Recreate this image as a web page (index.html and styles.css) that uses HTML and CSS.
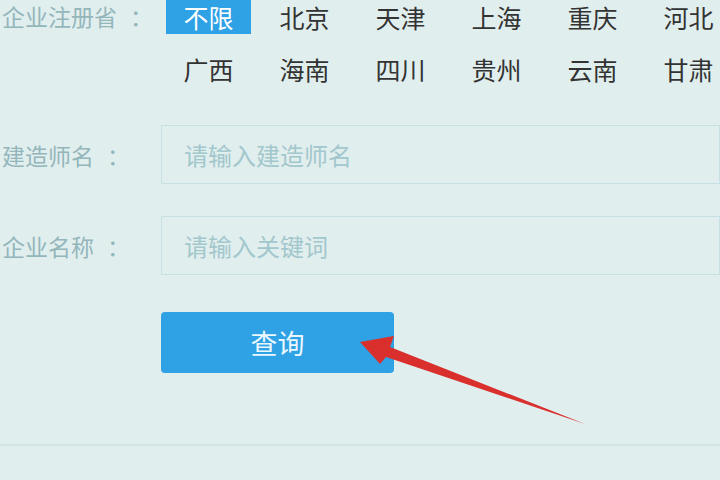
FILE: index.html
```html
<!DOCTYPE html>
<html lang="zh-CN">
<head>
    <meta charset="UTF-8">
    <meta name="viewport" content="width=device-width, initial-scale=1.0">
    <title>建造师查询</title>
    <link rel="stylesheet" href="styles.css">
</head>
<body>
    <div class="page">
        <div class="province-row">
            <span class="label">企业注册省<span class="colon">：</span></span>
            <ul class="province-list">
                <li class="active">不限</li>
                <li>北京</li>
                <li>天津</li>
                <li>上海</li>
                <li>重庆</li>
                <li>河北</li>
                <li>广西</li>
                <li>海南</li>
                <li>四川</li>
                <li>贵州</li>
                <li>云南</li>
                <li>甘肃</li>
            </ul>
        </div>
        <form class="search-form">
            <div class="form-group">
                <label for="builder_name">建造师名<span class="colon">：</span></label>
                <input type="text" id="builder_name" placeholder="请输入建造师名">
            </div>
            <div class="form-group">
                <label for="company_name">企业名称<span class="colon">：</span></label>
                <input type="text" id="company_name" placeholder="请输入关键词">
            </div>
            <div class="form-actions">
                <button type="button" class="btn">查询</button>
            </div>
        </form>
        <div class="divider"></div>
        <svg class="arrow" width="720" height="480" viewBox="0 0 720 480">
            <polygon points="360,342 394,336 390,347 585,424 386,357 380,364" fill="#d9302e"/>
        </svg>
    </div>
</body>
</html>
```

FILE: styles.css
```css
body {
    margin: 0;
    background-color: #e1eeee;
    font-family: "Noto Sans CJK SC", "Noto Sans", sans-serif;
    overflow: hidden;
}
.page {
    position: relative;
    width: 720px;
    height: 480px;
    overflow: hidden;
}
.label, .form-group label {
    width: 161px;
    flex-shrink: 0;
    padding-left: 2px;
    box-sizing: border-box;
    font-size: 23px;
    color: #93b6bb;
}
.colon {
    margin-left: 13px;
}
.province-row {
    display: flex;
}
.province-row .label {
    line-height: 32px;
}
.province-list {
    list-style: none;
    margin: 0;
    padding: 0 0 0 5px;
    display: flex;
    flex-wrap: wrap;
    flex-shrink: 0;
    row-gap: 18px;
    width: 581px;
}
.province-list li {
    width: 85px;
    height: 34px;
    line-height: 34px;
    margin-right: 11px;
    text-align: center;
    font-size: 25px;
    color: #333;
}
.province-list li.active {
    background: #2fa1e5;
    color: #fff;
}
.search-form {
    margin-top: 39px;
}
.form-group {
    display: flex;
    align-items: center;
    margin-bottom: 32px;
}
.form-group input {
    width: 620px;
    height: 59px;
    box-sizing: border-box;
    padding: 0 22px;
    border: 1px solid #c6e0e4;
    background: #e1eeee;
    font-family: inherit;
    font-size: 24px;
    color: #333;
    outline: none;
}
.form-group input::placeholder {
    color: #a2c7cc;
}
.form-actions {
    padding-left: 161px;
    margin-top: 37px;
}
.btn {
    width: 233px;
    height: 61px;
    border: none;
    border-radius: 4px;
    background: #2fa1e5;
    color: #eaf7ff;
    font-family: inherit;
    font-size: 27px;
    cursor: pointer;
}
.divider {
    margin-top: 71px;
    height: 2px;
    background: #d2e4e5;
}
.arrow {
    position: absolute;
    left: 0;
    top: 0;
    pointer-events: none;
}
```
